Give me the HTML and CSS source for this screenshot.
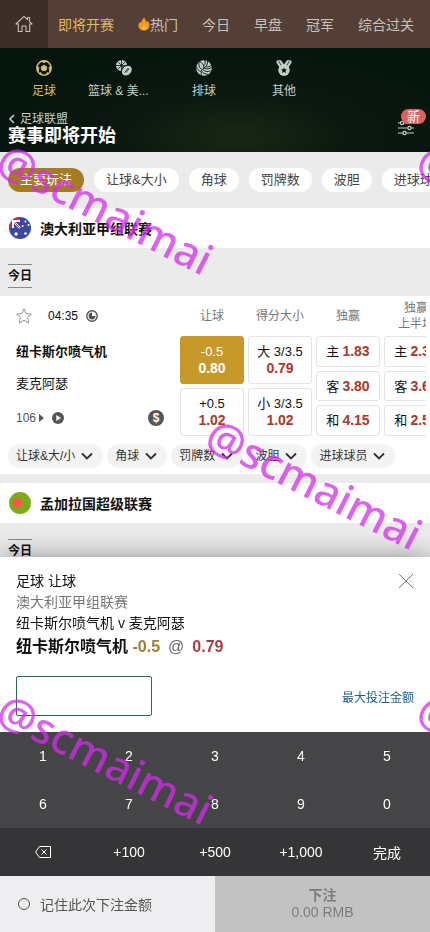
FILE: index.html
```html
<!DOCTYPE html>
<html lang="zh-CN">

<head>
    <meta charset="UTF-8">
    <meta name="viewport" content="width=device-width, initial-scale=1.0">
    <title>赛事即将开始</title>
    <link rel="stylesheet" href="styles.css">
</head>

<body>

    <!-- shared icons -->
    <svg class="sprite" aria-hidden="true">
        <symbol id="chevron" viewBox="0 0 12 12">
            <path d="M1 3.5 L6 8.5 L11 3.5" fill="none" stroke="currentColor" stroke-width="1.9" />
        </symbol>
    </svg>

    <nav class="top-nav">
        <a class="home" href="#" aria-label="首页">
            <svg width="18" height="18" viewBox="0 0 18 18" fill="none" stroke="currentColor" stroke-width="1.1" stroke-linejoin="round">
                <path d="M1 9 L9 1.3 L12.5 4.7 V2.5 H14.5 V6.6 L17 9 H14.7 V16.5 H11 V11 H7 V16.5 H3.3 V9 Z" />
            </svg>
        </a>
        <div class="top-links">
            <a class="active" href="#">即将开赛</a>
            <a class="hot" href="#">
                <svg width="12" height="14" viewBox="0 0 12 14">
                    <path d="M6.4 0.5 C7 3 8.6 4 8.9 5.6 C9.5 5.2 9.7 4.4 9.7 3.8 C11 5.4 11.8 7 11.5 9 C11.2 11.6 9 13.5 6 13.5 C3 13.5 0.7 11.5 0.5 9 C0.4 7 1.3 5.7 2.2 4.5 C2.3 5.4 2.6 6 3.2 6.3 C3.3 4 4.5 2.2 6.4 0.5 Z" fill="#f59a1b" />
                    <path d="M6.2 7 C7.4 8.6 8.5 9.4 8.2 11 C8 12.3 7.2 13 6 13 C4.7 13 3.8 12.2 3.8 11 C3.8 9.6 5.4 8.8 6.2 7 Z" fill="#ffb52e" />
                </svg>热门</a>
            <a href="#">今日</a>
            <a href="#">早盘</a>
            <a href="#">冠军</a>
            <a href="#">综合过关</a>
        </div>
    </nav>

    <header class="banner">
        <div class="sports">
            <a class="sport active" href="#">
                <svg width="16" height="16" viewBox="0 0 16 16" fill="none" stroke="currentColor">
                    <circle cx="8" cy="8" r="7.2" stroke-width="1.5" />
                    <path d="M8 5 L11 7.2 L9.9 10.6 H6.1 L5 7.2 Z M5.4 1.3 L8 2.8 L10.6 1.3 Z M1 6.4 L3 7.4 L2.2 11.2 Z M15 6.4 L13 7.4 L13.8 11.2 Z M4.6 12.4 L6 14.7 L3.6 13.6 Z M11.4 12.4 L10 14.7 L12.4 13.6 Z" fill="currentColor" stroke-width="0.8" />
                </svg>
                <span>足球</span>
            </a>
            <a class="sport" href="#">
                <svg width="16" height="16" viewBox="0 0 16 16">
                    <circle cx="5.5" cy="5.5" r="5.5" fill="currentColor" />
                    <path d="M1.6 1.6 L9.4 9.4 M9.4 1.6 L1.6 9.4 M5.5 0 V11 M0 5.5 H11" stroke="#07150f" stroke-width="0.8" />
                    <ellipse cx="10.8" cy="10.6" rx="6" ry="4.8" transform="rotate(-45 10.8 10.6)" fill="currentColor" stroke="#07150f" stroke-width="1" />
                    <path d="M8.6 12.8 L13 8.4 M9 10.8 L10.6 12.4 M10.2 9.6 L11.8 11.2 M11.4 8.4 L13 10" stroke="#07150f" stroke-width="0.8" />
                </svg>
                <span class="long">篮球 &amp; 美...</span>
            </a>
            <a class="sport" href="#">
                <svg width="16" height="16" viewBox="0 0 16 16">
                    <circle cx="8" cy="8" r="7.8" fill="currentColor" />
                    <g fill="none" stroke="#07150f" stroke-width="0.9">
                        <path d="M8 8 C8 5 6.5 2.5 3.2 1.5 M8 8 C10.6 6.5 12 4 11.5 0.5 M8 8 C5.4 9.5 4.6 12.5 5.5 16" />
                        <path d="M8 8 C10.6 9.5 13.6 9.2 16 7 M10 6.6 C12 7.5 14 7 15.4 4.6 M7.8 5.6 C9.3 4.5 9.5 2.5 8.8 0" />
                        <path d="M6 9.5 C3.5 8.5 2.5 6 3 2.2 M4.8 11.6 C2.5 10.8 1 9 0.3 6.5 M7 9.8 C9.5 11.8 12 12 14.6 10.8 M6.2 11.8 C8.2 13.8 10 14.4 12 14.2" />
                    </g>
                </svg>
                <span>排球</span>
            </a>
            <a class="sport" href="#">
                <svg width="16" height="16" viewBox="0 0 16 16">
                    <path d="M1.2 0.3 H5 L8 4.6 L11 0.3 H14.8 L15.8 2 L12.5 7.5 H3.5 L0.2 2 Z" fill="currentColor" />
                    <path d="M2.6 1.2 L5.4 5.6 M13.4 1.2 L10.6 5.6" stroke="#07150f" stroke-width="0.8" />
                    <circle cx="8" cy="10.3" r="5.7" fill="currentColor" />
                    <path d="M8 7.4 L8.9 9.3 L11 9.5 L9.5 10.9 L9.9 13 L8 12 L6.1 13 L6.5 10.9 L5 9.5 L7.1 9.3 Z" fill="#07150f" />
                </svg>
                <span>其他</span>
            </a>
        </div>
        <div class="heading">
            <div>
                <a class="back" href="#">
                    <svg width="8" height="10" viewBox="0 0 8 10" fill="none" stroke="currentColor" stroke-width="1.6">
                        <path d="M6 1 L2 5 L6 9" />
                    </svg>足球联盟</a>
                <h1>赛事即将开始</h1>
            </div>
            <button class="filter-btn" aria-label="筛选">
                <svg width="16" height="16" viewBox="0 0 16 16" fill="#07150f" stroke="currentColor" stroke-width="1.2">
                    <path d="M0 3 H16 M0 8 H16 M0 13 H16" />
                    <circle cx="4" cy="3" r="1.6" />
                    <circle cx="11.5" cy="8" r="1.6" />
                    <circle cx="6.5" cy="13" r="1.6" />
                </svg>
                <span class="badge">新</span>
            </button>
        </div>
    </header>

    <main>
        <div class="markets">
            <button class="market active">主要玩法</button>
            <button class="market">让球&amp;大小</button>
            <button class="market">角球</button>
            <button class="market">罚牌数</button>
            <button class="market">波胆</button>
            <button class="market">进球球员</button>
        </div>

        <section>
            <h2 class="league">
                <svg width="24" height="24" viewBox="0 0 24 24">
                    <clipPath id="round"><circle cx="12" cy="12" r="11" /></clipPath>
                    <g clip-path="url(#round)">
                        <rect width="24" height="24" fill="#3c489c" />
                        <path d="M1 1 H12 V4 H5 V12 H1 Z" fill="#c8274b" />
                        <path d="M5 5 L12 12 M5 12 V5 H12" fill="none" stroke="#fff" stroke-width="2" />
                        <path d="M6.5 6.5 L11.5 11.5" stroke="#c8274b" stroke-width="1" />
                        <g fill="#fff">
                            <circle cx="8" cy="18" r="1.7" />
                            <circle cx="17.5" cy="5.5" r="1" />
                            <circle cx="14.6" cy="10" r="1" />
                            <circle cx="20.5" cy="9" r="1" />
                            <circle cx="17.5" cy="17.5" r="1.3" />
                        </g>
                    </g>
                </svg>
                澳大利亚甲组联赛
            </h2>
            <h3 class="day">今日</h3>

            <article class="match">
                <div class="match-main">
                    <div class="match-info">
                        <div class="match-time">
                            <button class="icon-btn star" aria-label="收藏">
                                <svg width="16" height="16" viewBox="0 0 16 16" fill="none" stroke="currentColor" stroke-width="0.9">
                                    <path d="M8 0.8 L10.2 5.6 L15.4 6.1 L11.5 9.6 L12.7 15 L8 12.3 L3.3 15 L4.5 9.6 L0.6 6.1 L5.8 5.6 Z" />
                                </svg>
                            </button>
                            <time>04:35</time>
                            <svg width="12" height="12" viewBox="0 0 12 12" fill="none" stroke="#555">
                                <circle cx="6" cy="6" r="5.2" stroke-width="1.4" />
                                <path d="M6 2.6 A3.4 3.4 0 1 0 9.4 6 H6 Z" fill="#555" stroke="none" />
                            </svg>
                        </div>
                        <div class="team home-team">纽卡斯尔喷气机</div>
                        <div class="team">麦克阿瑟</div>
                        <div class="match-more">
                            <a href="#">106<svg width="5" height="8" viewBox="0 0 5 8"><path d="M0 0 L5 4 L0 8 Z" fill="#555" /></svg></a>
                            <svg width="12" height="12" viewBox="0 0 12 12">
                                <circle cx="6" cy="6" r="6" fill="#555" />
                                <path d="M4.3 3 L9 6 L4.3 9 Z" fill="#fff" />
                            </svg>
                            <span class="cash">$</span>
                        </div>
                    </div>
                    <div class="odds">
                        <div class="odds-col">
                            <div class="odds-head">让球</div>
                            <button class="odd selected"><span>-0.5</span><b>0.80</b></button>
                            <button class="odd"><span>+0.5</span><b>1.02</b></button>
                        </div>
                        <div class="odds-col">
                            <div class="odds-head">得分大小</div>
                            <button class="odd"><span>大 3/3.5</span><b>0.79</b></button>
                            <button class="odd"><span>小 3/3.5</span><b>1.02</b></button>
                        </div>
                        <div class="odds-col inline">
                            <div class="odds-head">独赢</div>
                            <button class="odd"><span>主</span><b>1.83</b></button>
                            <button class="odd"><span>客</span><b>3.80</b></button>
                            <button class="odd"><span>和</span><b>4.15</b></button>
                        </div>
                        <div class="odds-col inline">
                            <div class="odds-head">独赢<br>上半场</div>
                            <button class="odd"><span>主</span><b>2.38</b></button>
                            <button class="odd"><span>客</span><b>3.60</b></button>
                            <button class="odd"><span>和</span><b>2.53</b></button>
                        </div>
                    </div>
                </div>
                <div class="more-markets">
                    <button>让球&amp;大/小<svg width="12" height="12"><use href="#chevron" /></svg></button>
                    <button>角球<svg width="12" height="12"><use href="#chevron" /></svg></button>
                    <button>罚牌数<svg width="12" height="12"><use href="#chevron" /></svg></button>
                    <button>波胆<svg width="12" height="12"><use href="#chevron" /></svg></button>
                    <button>进球球员<svg width="12" height="12"><use href="#chevron" /></svg></button>
                </div>
            </article>
        </section>

        <section>
            <h2 class="league">
                <svg width="24" height="24" viewBox="0 0 24 24">
                    <circle cx="12" cy="12" r="11" fill="#79ac16" />
                    <circle cx="9.5" cy="12" r="5" fill="#fb5650" />
                </svg>
                孟加拉国超级联赛
            </h2>
            <h3 class="day">今日</h3>
        </section>
    </main>

    <form class="betslip">
        <div class="slip-body">
            <div class="slip-top">
                <div>
                    <p>足球 让球</p>
                    <p class="slip-league">澳大利亚甲组联赛</p>
                    <p>纽卡斯尔喷气机 v 麦克阿瑟</p>
                </div>
                <button type="button" class="icon-btn close" aria-label="关闭">
                    <svg width="16" height="16" viewBox="0 0 16 16" stroke="#777" stroke-width="1">
                        <path d="M1 1 L15 15 M15 1 L1 15" />
                    </svg>
                </button>
            </div>
            <div class="pick">
                <span>纽卡斯尔喷气机 <span class="handicap">-0.5</span></span>
                <span class="at">@</span>
                <span class="price">0.79</span>
            </div>
            <div class="stake">
                <input type="text" inputmode="none" aria-label="投注金额">
                <a href="#">最大投注金额</a>
            </div>
        </div>

        <div class="keypad">
            <button type="button">1</button>
            <button type="button">2</button>
            <button type="button">3</button>
            <button type="button">4</button>
            <button type="button">5</button>
            <button type="button">6</button>
            <button type="button">7</button>
            <button type="button">8</button>
            <button type="button">9</button>
            <button type="button">0</button>
            <button type="button" class="dark" aria-label="删除">
                <svg width="16" height="12" viewBox="0 0 16 12" fill="none" stroke="currentColor" stroke-width="1">
                    <path d="M4.5 0.5 H15.5 V11.5 H4.5 L0.6 6 Z M6.5 3.5 L11.5 8.5 M11.5 3.5 L6.5 8.5" />
                </svg>
            </button>
            <button type="button" class="dark">+100</button>
            <button type="button" class="dark">+500</button>
            <button type="button" class="dark">+1,000</button>
            <button type="button" class="dark">完成</button>
        </div>

        <div class="slip-footer">
            <label class="remember"><input type="radio" name="remember">记住此次下注金额</label>
            <button type="button" class="place-bet" disabled><b>下注</b><span>0.00 RMB</span></button>
        </div>
    </form>

    <div class="watermarks" aria-hidden="true">
        <span class="mark mark-1">@scmaimai</span>
        <span class="mark mark-2">@scmaimai</span>
        <span class="mark mark-3">@scmaimai</span>
        <span class="mark mark-4">@scmaimai</span>
        <span class="mark mark-5">@scmaimai</span>
    </div>

</body>

</html>
```

FILE: styles.css
```css
* {
    margin: 0;
    padding: 0;
    box-sizing: border-box;
}

body {
    min-height: 100vh;
    overflow-x: hidden;
    font-family: "Liberation Sans", "Noto Sans CJK SC", sans-serif;
    font-size: 14px;
    color: #111;
    background-color: #ebebeb;
}

a {
    color: inherit;
    text-decoration: none;
}

button {
    font: inherit;
    color: inherit;
    border: none;
    background: none;
    cursor: pointer;
    white-space: nowrap;
}

svg {
    display: block;
    flex: none;
}

.sprite {
    position: absolute;
    width: 0;
    height: 0;
}

.icon-btn {
    display: flex;
}

/* top navigation */
.top-nav {
    display: flex;
    height: 48px;
    color: #cdc0b8;
    background-color: #533f35;
}

.home {
    display: flex;
    align-items: center;
    justify-content: center;
    width: 48px;
    flex: none;
    background-color: #3c2e28;
}

.top-links {
    display: flex;
    align-items: center;
    gap: 24px;
    padding-left: 10px;
    overflow-x: auto;
    scrollbar-width: none;
    white-space: nowrap;
}

.top-links .active {
    color: #dfb866;
}

.hot {
    display: flex;
    align-items: center;
}

/* banner */
.banner {
    padding: 12px 0 7px;
    color: #c3cec9;
    background: radial-gradient(ellipse at 55% 85%, #1a2614 0%, #0b180f 35%, #05150e 75%);
}

.sports {
    display: flex;
    padding: 0 4px;
}

.sport {
    display: flex;
    flex-direction: column;
    align-items: center;
    gap: 7px;
    width: 80px;
    font-size: 12px;
    line-height: 16px;
}

.sport.active {
    color: #d8bd7c;
}

.long {
    width: 72px;
}

.heading {
    display: flex;
    align-items: center;
    justify-content: space-between;
    padding: 0 16px 0 8px;
    margin-top: 12px;
}

.back {
    display: flex;
    align-items: center;
    gap: 4px;
    font-size: 12px;
    line-height: 16px;
}

.heading h1 {
    font-size: 18px;
    line-height: 18px;
    color: #fff;
}

.filter-btn {
    position: relative;
    color: #c3cec9;
}

.badge {
    position: absolute;
    top: -11px;
    left: 3px;
    width: 25px;
    border-radius: 8px;
    font-size: 13px;
    line-height: 15px;
    color: #fff;
    background-color: #dc625f;
}

/* market tabs */
.markets {
    display: flex;
    gap: 10px;
    padding: 16px 0 16px 8px;
    overflow-x: auto;
    scrollbar-width: none;
}

.market {
    flex: none;
    padding: 0 12px;
    border-radius: 12px;
    font-size: 13px;
    line-height: 24px;
    color: #444;
    background-color: #fff;
}

.market.active {
    color: #fff;
    background-color: #a57c22;
}

/* league */
.league {
    display: flex;
    align-items: center;
    gap: 8px;
    height: 40px;
    padding: 0 8px;
    font-size: 14px;
    background-color: #fff;
}

.day {
    width: 24px;
    margin: 16px 8px 8px;
    border-top: 1px solid #888;
    border-bottom: 1px solid #888;
    font-size: 12px;
    line-height: 22px;
}

/* match */
.match {
    padding-bottom: 6px;
    margin-bottom: 9px;
    background-color: #fff;
}

.match-main {
    display: flex;
    padding-right: 4px;
}

.match-info {
    width: 180px;
    flex: none;
    padding: 0 16px;
}

.match-time {
    display: flex;
    align-items: center;
    height: 40px;
    font-size: 12px;
}

.match-time time {
    margin: 0 8px 0 16px;
}

.star {
    color: #888;
}

.team {
    font-size: 13px;
    line-height: 32px;
}

.home-team {
    font-weight: bold;
}

.match-more {
    display: flex;
    align-items: center;
    gap: 8px;
    height: 36px;
    font-size: 12px;
    color: #555;
}

.match-more a {
    display: flex;
    align-items: center;
    gap: 3px;
}

.cash {
    width: 16px;
    margin-left: auto;
    border-radius: 50%;
    font-weight: bold;
    line-height: 16px;
    text-align: center;
    color: #fff;
    background-color: #555;
}

.odds {
    display: flex;
    gap: 4px;
    flex: 1;
    overflow-x: auto;
    scrollbar-width: none;
}

.odds-col {
    display: grid;
    grid-template-rows: 36px 48px 48px;
    row-gap: 4px;
    width: 64px;
    flex: none;
}

.odds-col.inline {
    grid-template-rows: 36px 31px 30px 31px;
}

.odds-head {
    display: flex;
    align-items: center;
    justify-content: center;
    margin-bottom: -4px;
    font-size: 12px;
    line-height: 16px;
    text-align: center;
    color: #777;
}

.odd {
    display: flex;
    flex-direction: column;
    align-items: center;
    justify-content: center;
    border: 1px solid #e4e4e4;
    border-radius: 3px;
    font-size: 13px;
    line-height: 17px;
}

.inline .odd {
    flex-direction: row;
    gap: 3px;
}

.odd b {
    font-size: 14px;
    color: #b0352a;
}

.odd.selected,
.odd.selected b {
    color: #fff;
}

.odd.selected {
    border-color: #c6992b;
    background-color: #c6992b;
}

.more-markets {
    display: flex;
    gap: 4px;
    padding: 8px 8px 0;
}

.more-markets button {
    display: flex;
    align-items: center;
    gap: 6px;
    padding: 0 10px 0 8px;
    border-radius: 12px;
    font-size: 12px;
    line-height: 24px;
    color: #333;
    background-color: #f3f3f4;
}

/* bet slip */
.betslip {
    position: fixed;
    left: 0;
    right: 0;
    bottom: 0;
    background-color: #fff;
    box-shadow: 0 0 24px rgba(0, 0, 0, 0.4);
}

.slip-body {
    padding: 14px 16px 16px;
}

.slip-top {
    display: flex;
    align-items: flex-start;
    justify-content: space-between;
    line-height: 21px;
}

.slip-league {
    color: #777;
}

.close {
    margin-top: 2px;
}

.pick {
    display: flex;
    gap: 8px;
    font-size: 16px;
    font-weight: bold;
    line-height: 26px;
}

.handicap {
    color: #9a7f35;
}

.at {
    font-weight: normal;
    color: #666;
}

.price {
    color: #ad3a3f;
}

.stake {
    display: flex;
    align-items: center;
    justify-content: space-between;
    margin-top: 16px;
}

.stake input {
    width: 136px;
    height: 40px;
    padding: 0 8px;
    border: 1px solid #2f6b50;
    border-radius: 2px;
    font-size: 16px;
    outline: none;
}

.stake a {
    font-size: 12px;
    color: #1b5f8c;
}

.keypad {
    display: grid;
    grid-template-columns: repeat(5, 1fr);
    grid-auto-rows: 48px;
    color: #fff;
    background-color: #454446;
}

.keypad button {
    display: flex;
    align-items: center;
    justify-content: center;
}

.keypad .dark {
    background-color: #353436;
}

.slip-footer {
    display: grid;
    grid-template-columns: 1fr 1fr;
    height: 56px;
}

.remember {
    display: flex;
    align-items: center;
    gap: 10px;
    padding-left: 18px;
    color: #555;
    background-color: #eeedef;
}

.remember input {
    appearance: none;
    width: 12px;
    height: 12px;
    border: 1px solid #555;
    border-radius: 50%;
}

.remember input:checked {
    background-color: #555;
}

.place-bet {
    display: flex;
    flex-direction: column;
    align-items: center;
    justify-content: center;
    line-height: 17px;
    color: #7c7c7c;
    background-color: #c3c2c3;
    cursor: default;
}

/* watermark */
.watermarks {
    position: fixed;
    inset: 0;
    overflow: hidden;
    pointer-events: none;
}

.mark {
    position: absolute;
    font-family: "Noto Sans", sans-serif;
    font-size: 43px;
    font-weight: 500;
    line-height: 43px;
    color: #d32cec;
    opacity: 0.75;
    transform: rotate(27deg);
    transform-origin: 0 0;
}

.mark-1 {
    left: 11px;
    top: 136px;
}

.mark-2 {
    left: 220px;
    top: 411px;
}

.mark-3 {
    left: 11px;
    top: 686px;
}

.mark-4 {
    left: 431px;
    top: 136px;
}

.mark-5 {
    left: 431px;
    top: 686px;
}
```
